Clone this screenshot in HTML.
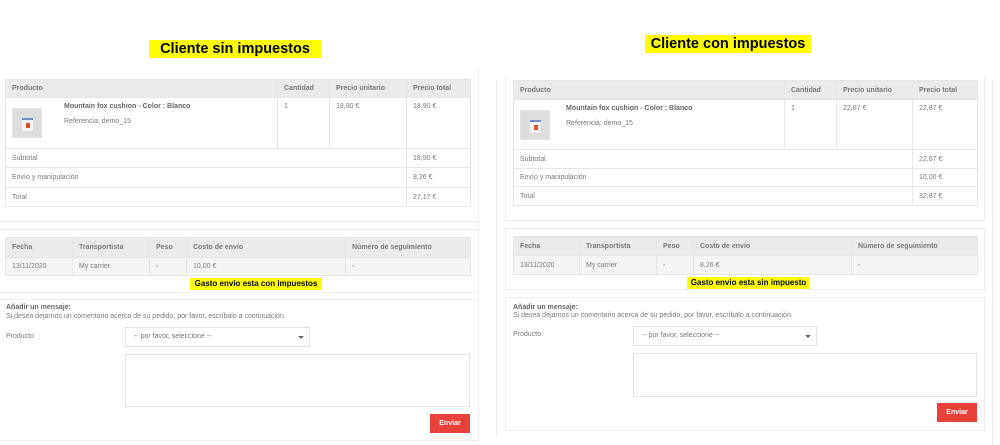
<!DOCTYPE html>
<html><head><meta charset="utf-8"><style>
*{box-sizing:border-box;margin:0;padding:0}
body{width:1000px;height:445px;background:#fff;position:relative;overflow:hidden;font-family:"Liberation Sans",sans-serif;font-size:7px;color:#7a7a7a}
.a{position:absolute}
.box{position:absolute;border:1px solid #eee;background:#fff}
.hl{position:absolute;background:#ffff00;color:#000;font-weight:bold;font-size:14.5px;line-height:18px;text-align:center}
.yl{position:absolute;background:#ffff00;color:#000;font-weight:bold;font-size:8px;line-height:12px;text-align:center}
table{position:absolute;border-collapse:collapse;table-layout:fixed}
td{border:1px solid #e6e6e6;vertical-align:top;padding:5px 6px;font-size:7px;color:#7a7a7a}
.h td{background:#ebebeb;font-weight:bold;color:#777;vertical-align:middle;padding:0 6px}
.g td{background:#f5f5f5;vertical-align:middle;padding:0 6px}
.img{position:absolute;width:30px;height:30px;background:#ddd;border:1px solid #e4e4e4}
.img:after{content:"";position:absolute;left:9px;top:9px;width:11px;height:11px;background:#f4f4f4;border-top:2px solid #6b8fb8}
.img:before{content:"";position:absolute;left:13px;top:14px;width:4px;height:5px;background:#d9512c;z-index:2}
.sel{position:absolute;border:1px solid #e2e2e2;background:#fff;padding:0 8px;line-height:18px;color:#777}
.sel:after{content:"";position:absolute;right:5px;top:8px;border:3px solid transparent;border-top:3px solid #666}
.ta{position:absolute;border:1px solid #e2e2e2;background:#fff}
.btn{position:absolute;background:#e8403b;color:#fff;text-align:center;font-weight:bold;line-height:19px;font-size:7px}
</style></head><body>

<div class="hl" style="left:149px;top:40px;width:172px;">Cliente sin impuestos</div>
<div class="hl" style="left:645px;top:35px;width:166px;">Cliente con impuestos</div>

<!-- LEFT -->
<div class="a" style="left:478px;top:70px;width:1px;height:370px;background:#eee"></div>
<div class="box" style="left:-2px;top:70px;width:481px;height:152px;border-top:none"></div>
<table style="left:5px;top:79px;width:465px">
<colgroup><col style="width:272px"><col style="width:52px"><col style="width:77px"><col style="width:64px"></colgroup>
<tr class="h" style="height:18px"><td>Producto</td><td>Cantidad</td><td>Precio unitario</td><td>Precio total</td></tr>
<tr style="height:51px"><td style="position:relative"><div class="img" style="left:6px;top:10px"></div><div style="margin-left:52px;font-weight:bold;color:#666">Mountain fox cushion - Color : Blanco</div><div style="margin-left:52px;margin-top:8px">Referencia: demo_15</div></td><td>1</td><td>18,90 €</td><td>18,90 €</td></tr>
<tr style="height:19px"><td colspan="3" style="vertical-align:middle;padding-top:0;padding-bottom:0">Subtotal</td><td style="vertical-align:middle;padding-top:0;padding-bottom:0">18,90 €</td></tr>
<tr style="height:20px"><td colspan="3" style="vertical-align:middle;padding-top:0;padding-bottom:0">Envío y manipulación</td><td style="vertical-align:middle;padding-top:0;padding-bottom:0">8,26 €</td></tr>
<tr style="height:19px"><td colspan="3" style="vertical-align:middle;padding-top:0;padding-bottom:0">Total</td><td style="vertical-align:middle;padding-top:0;padding-bottom:0">27,17 €</td></tr>
</table>

<div class="box" style="left:-2px;top:229px;width:481px;height:64px"></div>
<table style="left:5px;top:237px;width:465px">
<colgroup><col style="width:67px"><col style="width:77px"><col style="width:37px"><col style="width:159px"><col style="width:125px"></colgroup>
<tr class="h" style="height:20px"><td>Fecha</td><td>Transportista</td><td>Peso</td><td>Costo de envío</td><td>Número de seguimiento</td></tr>
<tr class="g" style="height:18px"><td>13/11/2020</td><td>My carrier</td><td>-</td><td>10,00 €</td><td>-</td></tr>
</table>
<div class="yl" style="left:190px;top:278px;width:132px">Gasto envio esta con impuestos</div>

<div class="box" style="left:-2px;top:299px;width:481px;height:142px"></div>
<div class="a" style="left:6px;top:304px;font-weight:bold;color:#666">Añadir un mensaje:</div>
<div class="a" style="left:6px;top:313px">Si desea dejarnos un comentario acerca de su pedido, por favor, escríbalo a continuación.</div>
<div class="a" style="left:6px;top:333px">Producto</div>
<div class="sel" style="left:125px;top:327px;width:185px;height:20px">-- por favor, seleccione --</div>
<div class="ta" style="left:125px;top:354px;width:345px;height:53px"></div>
<div class="btn" style="left:430px;top:414px;width:40px;height:19px">Enviar</div>

<!-- RIGHT -->
<div class="a" style="left:496px;top:80px;width:1px;height:358px;background:#eee"></div>
<div class="a" style="left:992px;top:80px;width:1px;height:365px;background:#eee"></div>
<div class="box" style="left:505px;top:78px;width:480px;height:143px;border-top:none"></div>
<table style="left:513px;top:80px;width:464px">
<colgroup><col style="width:271px"><col style="width:52px"><col style="width:76px"><col style="width:65px"></colgroup>
<tr class="h" style="height:19px"><td>Producto</td><td>Cantidad</td><td>Precio unitario</td><td>Precio total</td></tr>
<tr style="height:50px"><td style="position:relative"><div class="img" style="left:6px;top:10px"></div><div style="margin-left:46px;font-weight:bold;color:#666">Mountain fox cushion - Color : Blanco</div><div style="margin-left:46px;margin-top:8px">Referencia: demo_15</div></td><td>1</td><td>22,87 €</td><td>22,87 €</td></tr>
<tr style="height:19px"><td colspan="3" style="vertical-align:middle;padding-top:0;padding-bottom:0">Subtotal</td><td style="vertical-align:middle;padding-top:0;padding-bottom:0">22,87 €</td></tr>
<tr style="height:18px"><td colspan="3" style="vertical-align:middle;padding-top:0;padding-bottom:0">Envío y manipulación</td><td style="vertical-align:middle;padding-top:0;padding-bottom:0">10,00 €</td></tr>
<tr style="height:19px"><td colspan="3" style="vertical-align:middle;padding-top:0;padding-bottom:0">Total</td><td style="vertical-align:middle;padding-top:0;padding-bottom:0">32,87 €</td></tr>
</table>

<div class="box" style="left:505px;top:228px;width:480px;height:62px"></div>
<table style="left:513px;top:236px;width:464px">
<colgroup><col style="width:66px"><col style="width:77px"><col style="width:37px"><col style="width:158px"><col style="width:126px"></colgroup>
<tr class="h" style="height:19px"><td>Fecha</td><td>Transportista</td><td>Peso</td><td>Costo de envío</td><td>Número de seguimiento</td></tr>
<tr class="g" style="height:19px"><td>13/11/2020</td><td>My carrier</td><td>-</td><td>8,26 €</td><td>-</td></tr>
</table>
<div class="yl" style="left:687px;top:277px;width:123px">Gasto envio esta sin impuesto</div>

<div class="box" style="left:505px;top:297px;width:480px;height:134px"></div>
<div class="a" style="left:513px;top:304px;font-weight:bold;color:#666">Añadir un mensaje:</div>
<div class="a" style="left:513px;top:312px">Si desea dejarnos un comentario acerca de su pedido, por favor, escríbalo a continuación.</div>
<div class="a" style="left:513px;top:331px">Producto</div>
<div class="sel" style="left:633px;top:326px;width:184px;height:20px">-- por favor, seleccione --</div>
<div class="ta" style="left:633px;top:353px;width:344px;height:44px"></div>
<div class="btn" style="left:937px;top:403px;width:40px;height:19px">Enviar</div>

</body></html>
